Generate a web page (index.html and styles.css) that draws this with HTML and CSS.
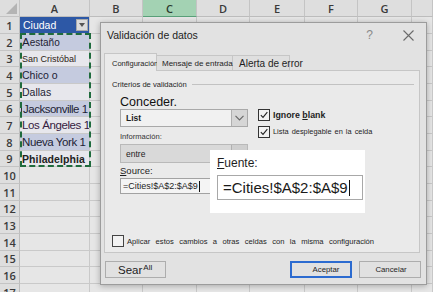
FILE: index.html
```html
<!DOCTYPE html>
<html lang="es">
<head>
<meta charset="utf-8">
<title>Validación de datos</title>
<link rel="stylesheet" href="styles.css">
</head>
<body>
<div class="sheet">
  <div class="corner"><span class="tri"></span></div><div class="ch">A</div><div class="ch">B</div><div class="ch ch-sel">C</div><div class="ch">D</div><div class="ch">E</div><div class="ch">F</div><div class="ch">G</div><div class="ch"></div>
  <div class="rh">1</div><div class="ca thead">Ciudad<span class="filt"></span></div><i></i><i></i><i></i><i></i><i></i><i></i><i></i>
  <div class="rh">2</div><div class="ca band t-aest"><span class="big">A</span>estaño</div><i></i><i></i><i></i><i></i><i></i><i></i><i></i>
  <div class="rh">3</div><div class="ca plain t-san">San Cristóbal</div><i></i><i></i><i></i><i></i><i></i><i></i><i></i>
  <div class="rh">4</div><div class="ca band t-chico">Chico o</div><i></i><i></i><i></i><i></i><i></i><i></i><i></i>
  <div class="rh">5</div><div class="ca plain t-dallas">Dallas</div><i></i><i></i><i></i><i></i><i></i><i></i><i></i>
  <div class="rh">6</div><div class="ca band t-big t-jack"><span class="bar"></span>Jacksonville 1</div><i></i><i></i><i></i><i></i><i></i><i></i><i></i>
  <div class="rh">7</div><div class="ca plain t-big t-purple">Los Ángeles 1</div><i></i><i></i><i></i><i></i><i></i><i></i><i></i>
  <div class="rh">8</div><div class="ca band t-big">Nueva York 1</div><i></i><i></i><i></i><i></i><i></i><i></i><i></i>
  <div class="rh">9</div><div class="ca plain t-phil">Philadelphia</div><i></i><i></i><i></i><i></i><i></i><i></i><i></i>
  <div class="rh">10</div><i></i><i></i><i></i><i></i><i></i><i></i><i></i><i></i>
  <div class="rh">11</div><i></i><i></i><i></i><i></i><i></i><i></i><i></i><i></i>
  <div class="rh">12</div><i></i><i></i><i></i><i></i><i></i><i></i><i></i><i></i>
  <div class="rh">13</div><i></i><i></i><i></i><i></i><i></i><i></i><i></i><i></i>
  <div class="rh">14</div><i></i><i></i><i></i><i></i><i></i><i></i><i></i><i></i>
  <div class="rh">15</div><i></i><i></i><i></i><i></i><i></i><i></i><i></i><i></i>
  <div class="rh">16</div><i></i><i></i><i></i><i></i><i></i><i></i><i></i><i></i>
  <div class="rh">17</div><i></i><i></i><i></i><i></i><i></i><i></i><i></i><i></i>
</div>
<div class="marquee"></div>

<div class="dialog">
  <div class="titlebar">
    <span class="title">Validación de datos</span>
    <span class="help">?</span>
    <svg class="close" width="11" height="11" viewBox="0 0 11 11"><path d="M0.5 0.5 L10.5 10.5 M10.5 0.5 L0.5 10.5" stroke="#6a6a6a" stroke-width="1.1" fill="none"/></svg>
  </div>
  <div class="tabs">
    <div class="tab tab-on">Configuración</div>
    <div class="tab tab-msg">Mensaje de entrada</div>
    <div class="tab tab-err">Alerta de error</div>
  </div>
  <div class="panel">
    <div class="group"><span>Criterios de validación</span><span class="rule"></span></div>
    <div class="cols">
      <div class="leftcol">
        <div class="lbl-big">Conceder.</div>
        <div class="select sel-list"><span class="val">List</span><span class="drop"><svg width="9" height="6" viewBox="0 0 9 6"><path d="M0.5 0.8 L4.5 5 L8.5 0.8" stroke="#666" stroke-width="1.1" fill="none"/></svg></span></div>
        <div class="lbl-small">Información:</div>
        <div class="select sel-entre"><span class="val">entre</span><span class="drop"></span></div>
        <div class="lbl-src"><u>S</u>ource:</div>
        <div class="input-small">=Cities!$A$2:$A$9<span class="caret"></span></div>
      </div>
      <div class="rightcol">
        <div class="chk-row"><span class="chk"><svg width="12" height="12" viewBox="0 0 12 12"><path d="M2.2 6.2 L4.8 8.8 L10 2.6" stroke="#222" stroke-width="1.3" fill="none"/></svg></span><span class="chk-bold">Ignore <u>b</u>lank</span></div>
        <div class="chk-row"><span class="chk"><svg width="12" height="12" viewBox="0 0 12 12"><path d="M2.2 6.2 L4.8 8.8 L10 2.6" stroke="#222" stroke-width="1.3" fill="none"/></svg></span><span class="chk-small">Lista desplegable en la celda</span></div>
      </div>
    </div>
    <div class="apply"><span class="chk"></span><span class="apply-txt">Aplicar estos cambios a otras celdas con la misma configuración</span></div>
  </div>
  <div class="buttons">
    <div class="btn btn-sear">Sear<sup>All</sup></div>
    <div class="btn btn-ok">Aceptar</div>
    <div class="btn btn-cancel">Cancelar</div>
  </div>
  <div class="popup">
    <div class="pop-lbl"><u>F</u>uente:</div>
    <div class="pop-input">=Cities!$A$2:$A$9<span class="caret-big"></span></div>
  </div>
</div>
</body>
</html>
```

FILE: styles.css
```css
html, body {
  margin: 0;
  padding: 0;
  width: 433px;
  height: 292px;
  overflow: hidden;
  background: #e4e4e4;
  font-family: "Liberation Sans", Arial, sans-serif;
}

.sheet {
  display: grid;
  grid-template-columns: 20px 70px 53px 54px 53px 55px 53px 54px 21px;
  grid-template-rows: 17px 17px 17px 16px 17px 17px 16px 17px 17px 16px 17px 17px 16px 17px 17px 16px 17px 17px;
  background: #e6e6e6;
}

.sheet > i {
  display: block;
  border-right: 1px solid #c9c9c9;
  border-bottom: 1px solid #c9c9c9;
  box-sizing: border-box;
}

.corner {
  background: #dedede;
  border-right: 1px solid #c4c4c4;
  border-bottom: 1px solid #c4c4c4;
  box-sizing: border-box;
  position: relative;
}
.tri {
  position: absolute;
  right: 2px;
  bottom: 2px;
  width: 0;
  height: 0;
  border-left: 11px solid transparent;
  border-bottom: 11px solid #b4b4b4;
}

.ch {
  background: #dedede;
  border-right: 1px solid #c4c4c4;
  border-bottom: 1px solid #bdbdbd;
  box-sizing: border-box;
  display: flex;
  align-items: center;
  justify-content: center;
  font-family: "Open Sans", "Liberation Sans", sans-serif;
  font-weight: 600;
  font-size: 11px;
  color: #3a3a3a;
}
.ch-sel {
  background: #a3d2b3;
  border-bottom: 1px solid #5aa07a;
  color: #2a3a2e;
}

.rh {
  background: #dedede;
  border-right: 1px solid #bdbdbd;
  border-bottom: 1px solid #c4c4c4;
  box-sizing: border-box;
  display: flex;
  align-items: center;
  justify-content: center;
  font-family: "Open Sans", "Liberation Sans", sans-serif;
  font-weight: 600;
  font-size: 11px;
  color: #3a3a3a;
}

.ca {
  border-right: 1px solid #c9c9c9;
  border-bottom: 1px solid #c9c9c9;
  box-sizing: border-box;
  display: flex;
  align-items: center;
  padding-left: 2px;
  white-space: nowrap;
  overflow: hidden;
  color: #1d1d35;
  font-size: 11px;
}
.thead {
  background: #2d58a6;
  color: #fff;
  font-size: 10.5px;
  position: relative;
  padding-left: 3px;
}
.filt {
  position: absolute;
  right: 1px;
  top: 2px;
  width: 12px;
  height: 12px;
  box-sizing: border-box;
  background: #dcdcdc;
  border: 1px solid #a9a9a9;
}
.filt::after {
  content: "";
  position: absolute;
  left: 2px;
  top: 3px;
  border-left: 3px solid transparent;
  border-right: 3px solid transparent;
  border-top: 4px solid #555;
}
.band { background: #c5cbdf; }
.plain { background: #e7e7ec; }

.t-aest { font-size: 10px; }
.big { font-size: 11.5px; }
.t-san { font-size: 9px; color: #2e2418; }
.t-chico { font-size: 10.5px; }
.t-dallas { font-size: 10.5px; }
.t-big { font-size: 11.5px; letter-spacing: -0.4px; }
.t-jack { letter-spacing: -0.5px; padding-left: 1px; }
.t-purple { color: #35203f; }
.t-phil { font-size: 10.5px; font-weight: bold; letter-spacing: 0.1px; color: #222; }
.bar {
  display: inline-block;
  width: 1px;
  height: 12px;
  background: #333;
  margin-right: 1px;
}

.marquee {
  position: absolute;
  left: 20px;
  top: 33px;
  width: 71px;
  height: 134px;
  box-sizing: border-box;
  border: 2px dashed #1f6b3d;
}

/* Dialog */
.dialog {
  position: absolute;
  left: 100px;
  top: 22px;
  width: 327px;
  height: 263px;
  box-sizing: border-box;
  background: #e2e2e2;
  border: 1px solid #9c9c9c;
  box-shadow: 0 1px 6px rgba(0, 0, 0, 0.28);
  display: flex;
  flex-direction: column;
}

.titlebar {
  height: 24px;
  display: flex;
  align-items: center;
  padding: 0 12px 0 6px;
}
.title {
  font-size: 10.5px;
  color: #1e1e1e;
  flex: 1;
}
.help {
  font-size: 12px;
  color: #8a8a8a;
  margin-right: 30px;
}
.close { display: block; }

.tabs {
  margin-top: 6px;
  height: 17px;
  display: flex;
  align-items: flex-end;
  padding-left: 3px;
  position: relative;
  z-index: 2;
}
.tab {
  height: 15px;
  box-sizing: border-box;
  border: 1px solid #c6c6c6;
  border-bottom: none;
  background: #dfdfdf;
  display: flex;
  align-items: center;
  white-space: nowrap;
  color: #1e1e1e;
}
.tab-on {
  width: 53px;
  height: 18px;
  margin-bottom: -1px;
  background: #eaeaea;
  font-size: 7.5px;
  padding-left: 7px;
  padding-top: 1px;
}
.tab-msg {
  width: 76px;
  font-size: 8px;
  padding-left: 5px;
  border-left: none;
}
.tab-err {
  width: 57px;
  font-size: 10px;
  padding-left: 6px;
  border-left: none;
  overflow: visible;
}

.panel {
  margin: 0 6px 0 3px;
  height: 183px;
  box-sizing: border-box;
  border: 1px solid #c6c6c6;
  background: #eaeaea;
  display: flex;
  flex-direction: column;
}

.group {
  margin-top: 8px;
  height: 10px;
  display: flex;
  align-items: center;
  padding: 0 5px 0 7px;
  font-size: 7.6px;
  color: #1e1e1e;
}
.rule {
  flex: 1;
  height: 1px;
  background: #c2c2c2;
  margin-left: 5px;
}

.cols {
  display: flex;
  padding-left: 15px;
  margin-top: 7px;
}
.leftcol {
  width: 128px;
  display: flex;
  flex-direction: column;
}
.lbl-big {
  font-size: 12.5px;
  line-height: 13px;
  height: 13px;
  color: #111;
}
.select {
  box-sizing: border-box;
  display: flex;
  align-items: center;
  border: 1px solid #a9a9a9;
}
.sel-list {
  height: 18px;
  background: #f1f1f1;
}
.sel-entre {
  height: 19px;
  margin-top: 2px;
  background: #d9d9d9;
  border-color: #b9b9b9;
}
.val {
  flex: 1;
  padding-left: 5px;
  font-size: 8.5px;
  color: #1e1e1e;
}
.sel-list .val { font-weight: bold; font-size: 8.5px; }
.drop {
  width: 16px;
  align-self: stretch;
  box-sizing: border-box;
  border-left: 1px solid #b0b0b0;
  background: #d6d6d6;
  display: flex;
  align-items: center;
  justify-content: center;
}
.sel-entre .drop { background: #cfcfcf; }

.lbl-small {
  margin-top: 5px;
  height: 10px;
  line-height: 10px;
  font-size: 7.6px;
  color: #333;
}
.lbl-src {
  margin-top: 2px;
  height: 12px;
  line-height: 12px;
  font-size: 9.5px;
  color: #1e1e1e;
}
.input-small {
  margin-top: 1px;
  height: 16px;
  width: 128px;
  box-sizing: border-box;
  border: 1px solid #a2a2a2;
  background: #f4f4f4;
  display: flex;
  align-items: center;
  padding-left: 2px;
  font-size: 9px;
  color: #1e1e1e;
  white-space: nowrap;
}
.caret {
  display: inline-block;
  width: 1px;
  height: 11px;
  background: #111;
  margin-left: 1px;
}

.rightcol {
  margin-left: 10px;
  padding-top: 13px;
  display: flex;
  flex-direction: column;
}
.chk-row {
  height: 17px;
  display: flex;
  align-items: flex-start;
}
.chk {
  width: 12px;
  height: 12px;
  box-sizing: border-box;
  border: 1px solid #333;
  background: #f2f2f2;
  display: flex;
  align-items: center;
  justify-content: center;
  flex: none;
}
.chk svg { display: block; }
.chk-bold {
  margin-left: 3px;
  font-size: 8.8px;
  font-weight: bold;
  line-height: 12px;
  color: #1e1e1e;
}
.chk-small {
  margin-left: 3px;
  font-size: 7.4px;
  line-height: 12px;
  word-spacing: 1px;
  color: #1e1e1e;
}

.apply {
  margin-top: auto;
  margin-bottom: 5px;
  padding-left: 7px;
  display: flex;
  align-items: center;
}
.apply .chk { border-color: #444; }
.apply-txt {
  margin-left: 3px;
  font-size: 7.6px;
  word-spacing: 3.3px;
  color: #1e1e1e;
  white-space: nowrap;
}

.buttons {
  margin-top: 8px;
  height: 17px;
  display: flex;
  padding: 0 5px 0 4px;
}
.btn {
  box-sizing: border-box;
  height: 17px;
  border: 1px solid #adadad;
  background: #e1e1e1;
  display: flex;
  align-items: center;
  justify-content: center;
  font-size: 7.8px;
  color: #1e1e1e;
}
.btn-sear {
  width: 61px;
  justify-content: flex-start;
  padding-left: 12px;
  font-size: 11.5px;
  color: #222;
}
.btn-sear sup {
  font-size: 8px;
  margin-left: 1px;
  position: relative;
  top: -2px;
  vertical-align: top;
}
.btn-ok {
  width: 62px;
  margin-left: auto;
  border: 2px solid #2c6bd0;
  padding-left: 10px;
}
.btn-cancel {
  width: 62px;
  margin-left: 7px;
  padding-left: 2px;
}

.popup {
  position: absolute;
  left: 109px;
  top: 127px;
  width: 155px;
  height: 63px;
  background: #fff;
  box-sizing: border-box;
  padding: 6px 2px 0 7px;
  z-index: 3;
}
.pop-lbl {
  font-size: 12px;
  line-height: 14px;
  height: 14px;
  color: #1e1e1e;
}
.pop-input {
  margin-top: 5px;
  height: 25px;
  box-sizing: border-box;
  border: 1px solid #a8a8a8;
  display: flex;
  align-items: center;
  padding-left: 5px;
  font-size: 15px;
  color: #1a1a1a;
  white-space: nowrap;
}
.caret-big {
  display: inline-block;
  width: 1px;
  height: 16px;
  background: #111;
  margin-left: 1px;
}
```
